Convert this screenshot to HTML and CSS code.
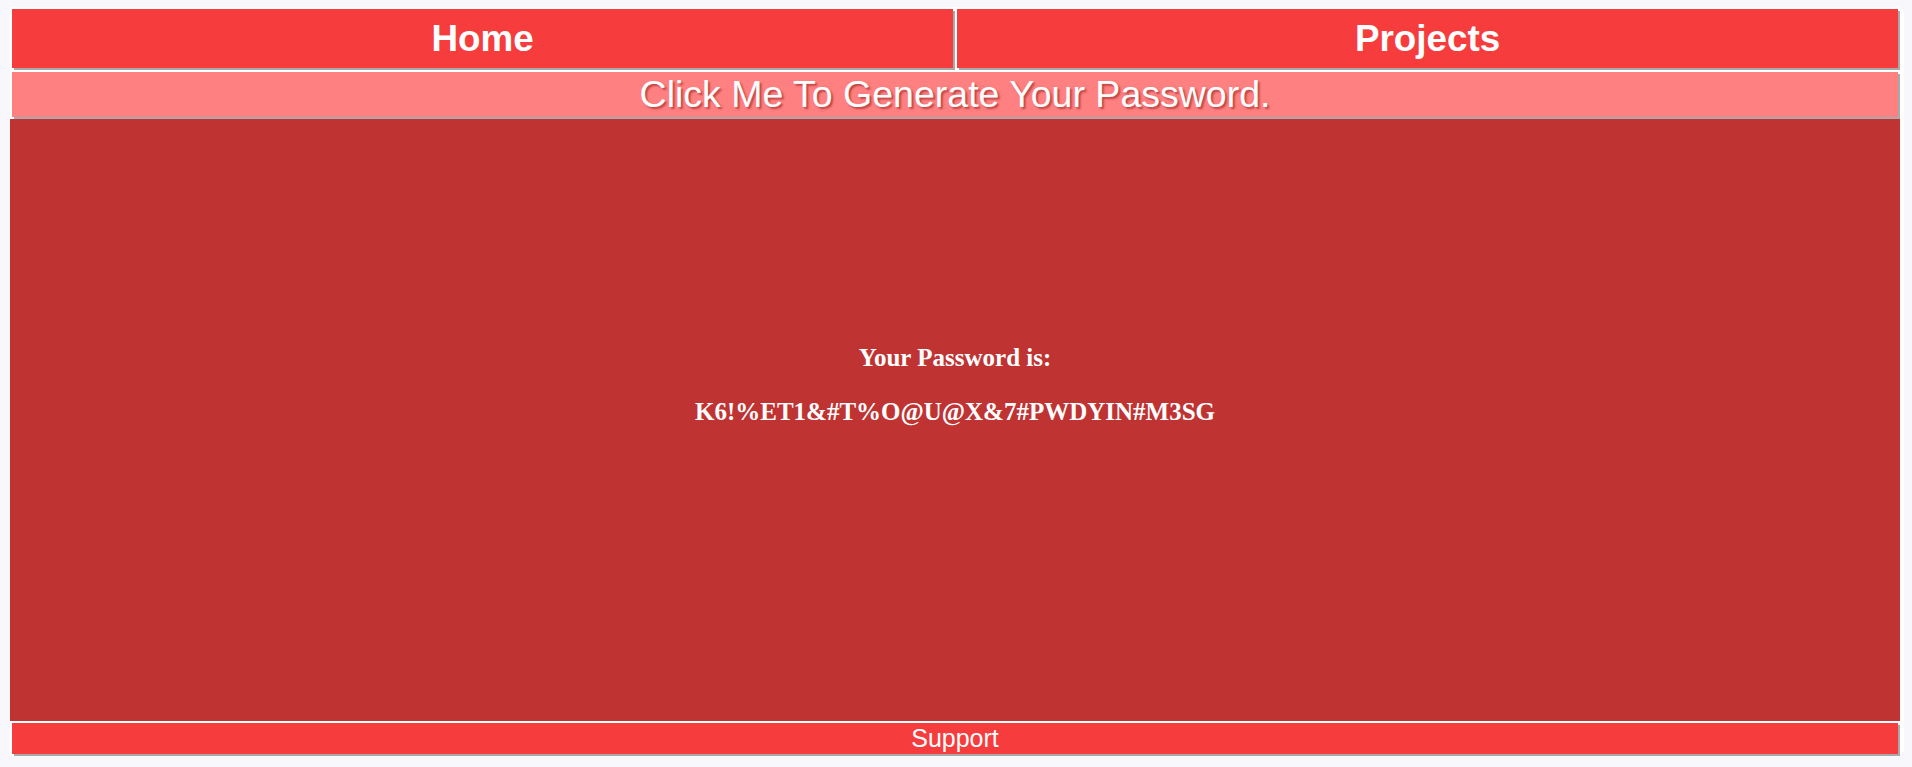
FILE: index.html
```html
<!DOCTYPE html>
<html lang="en">
<head>
<meta charset="utf-8">
<title>Password Generator</title>
<link rel="stylesheet" href="styles.css">
</head>
<body>
<div class="page">
  <nav class="nav">
    <a class="nav-item" href="#">Home</a>
    <a class="nav-item" href="#">Projects</a>
  </nav>
  <button class="generate">Click Me To Generate Your Password.</button>
  <section class="output">
    <p class="output-label">Your Password is:</p>
    <p class="output-value">K6!%ET1&amp;#T%O@U@X&amp;7#PWDYIN#M3SG</p>
  </section>
  <footer class="footer">Support</footer>
</div>
</body>
</html>
```
FILE: styles.css
```css
html {
  background: #f8f8fc;
}
body {
  margin: 0;
  padding: 7px 0 0 10px;
}
.page {
  width: 1894px;
  box-sizing: border-box;
  padding-right: 4px;
  background: #ffffff;
  border-radius: 0 8px 8px 0;
  display: flex;
  flex-direction: column;
}
.nav {
  display: flex;
}
.nav-item {
  flex: 1;
  margin: 2px;
  height: 59px;
  background: #f63c3c;
  box-shadow: 2px 2px 0 #a9a9a9;
  display: flex;
  align-items: center;
  justify-content: center;
  color: #ffffff;
  text-decoration: none;
  font: bold 36.8px "Liberation Sans", Arial, sans-serif;
}
.generate {
  margin: 2px;
  height: 45px;
  padding: 0;
  border: none;
  background: #ff8080;
  box-shadow: 2px 2px 0 #a9a9a9;
  color: #ffffff;
  font: 37.5px "Liberation Sans", Arial, sans-serif;
  text-shadow: 2px 2px 2px rgba(150, 30, 30, 0.6);
  display: flex;
  align-items: center;
  justify-content: center;
}
.output {
  height: 602px;
  box-sizing: border-box;
  padding-top: 224px;
  background: #bf3333;
  color: #ffffff;
  text-align: center;
  font: bold 25px "Liberation Serif", "Times New Roman", serif;
  display: flex;
  flex-direction: column;
  align-items: center;
  gap: 24px;
}
.output p {
  margin: 0;
  line-height: 30px;
}
.footer {
  margin: 2px;
  height: 31px;
  background: #f63c3c;
  box-shadow: 2px 2px 0 #a9a9a9;
  color: #ffffff;
  font: 25px "Liberation Sans", Arial, sans-serif;
  display: flex;
  align-items: center;
  justify-content: center;
}
```
